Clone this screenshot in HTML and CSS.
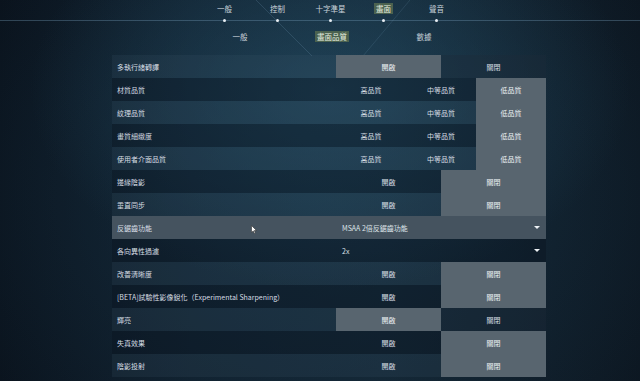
FILE: index.html
```html
<!DOCTYPE html>
<html lang="zh-Hant">
<head>
<meta charset="utf-8">
<link rel="stylesheet" href="styles.css">
</head>
<body>
<div class="screen">
  <svg class="deco" width="640" height="381" viewBox="0 0 640 381">
    <line x1="256" y1="0" x2="312" y2="56" stroke="rgba(150,195,225,0.16)" stroke-width="1"/>
    <line x1="410" y1="0" x2="363" y2="56" stroke="rgba(150,195,225,0.13)" stroke-width="1"/>
  </svg>

  <nav class="tabs">
    <span class="tab">一般</span>
    <span class="tab">控制</span>
    <span class="tab">十字準星</span>
    <span class="tab"><span class="hl">畫面</span></span>
    <span class="tab">聲音</span>
  </nav>
  <div class="rail">
    <span class="stop"><i class="dot"></i></span>
    <span class="stop"><i class="dot"></i></span>
    <span class="stop"><i class="dot"></i></span>
    <span class="stop"><i class="dot"></i></span>
    <span class="stop"><i class="dot"></i></span>
  </div>
  <nav class="subtabs">
    <span class="subtab">一般</span>
    <span class="subtab"><span class="hl">畫面品質</span></span>
    <span class="subtab">數據</span>
  </nav>

  <div class="table">
    <div class="row alt">
      <div class="label">多執行緒轉譯</div>
      <div class="seg"><span class="opt on">開啟</span><span class="opt dim">關閉</span></div>
    </div>
    <div class="row">
      <div class="label">材質品質</div>
      <div class="seg"><span class="opt">高品質</span><span class="opt">中等品質</span><span class="opt on">低品質</span></div>
    </div>
    <div class="row alt">
      <div class="label">紋理品質</div>
      <div class="seg"><span class="opt">高品質</span><span class="opt">中等品質</span><span class="opt on">低品質</span></div>
    </div>
    <div class="row">
      <div class="label">畫質細緻度</div>
      <div class="seg"><span class="opt">高品質</span><span class="opt">中等品質</span><span class="opt on">低品質</span></div>
    </div>
    <div class="row alt">
      <div class="label">使用者介面品質</div>
      <div class="seg"><span class="opt">高品質</span><span class="opt">中等品質</span><span class="opt on">低品質</span></div>
    </div>
    <div class="row">
      <div class="label">邊緣陰影</div>
      <div class="seg"><span class="opt">開啟</span><span class="opt on">關閉</span></div>
    </div>
    <div class="row alt">
      <div class="label">垂直同步</div>
      <div class="seg"><span class="opt">開啟</span><span class="opt on">關閉</span></div>
    </div>
    <div class="row hover">
      <div class="label">反鋸齒功能</div>
      <div class="dd"><span>MSAA 2倍反鋸齒功能</span><i class="caret"></i></div>
      <svg class="cursor" width="6" height="9" viewBox="0 0 6 9"><path d="M0.5 0.5 L0.5 7.5 L2.2 5.9 L3.4 8.5 L4.4 8 L3.3 5.5 L5.5 5.5 Z" fill="#fff" stroke="#333" stroke-width="0.6"/></svg>
    </div>
    <div class="row">
      <div class="label">各向異性過濾</div>
      <div class="dd"><span>2x</span><i class="caret"></i></div>
    </div>
    <div class="row alt">
      <div class="label">改善清晰度</div>
      <div class="seg"><span class="opt">開啟</span><span class="opt on">關閉</span></div>
    </div>
    <div class="row">
      <div class="label">[BETA]試驗性影像銳化（Experimental Sharpening）</div>
      <div class="seg"><span class="opt">開啟</span><span class="opt on">關閉</span></div>
    </div>
    <div class="row alt">
      <div class="label">輝亮</div>
      <div class="seg"><span class="opt on">開啟</span><span class="opt dim">關閉</span></div>
    </div>
    <div class="row">
      <div class="label">失真效果</div>
      <div class="seg"><span class="opt">開啟</span><span class="opt on">關閉</span></div>
    </div>
    <div class="row alt">
      <div class="label">陰影投射</div>
      <div class="seg"><span class="opt">開啟</span><span class="opt on">關閉</span></div>
    </div>
  </div>
</div>
</body>
</html>
```

FILE: styles.css
```css
* { box-sizing: border-box; }
html, body { margin: 0; padding: 0; }
body {
  width: 640px;
  height: 381px;
  overflow: hidden;
  background: #0c1722;
  font-family: "Noto Sans CJK TC", "Noto Sans", "Liberation Sans", sans-serif;
  color: #dde3e8;
}
.screen {
  position: relative;
  width: 640px;
  height: 381px;
  overflow: hidden;
  background:
    radial-gradient(ellipse 300px 200px at 330px 90px, rgba(40,85,110,0.55), rgba(40,85,110,0) 100%),
    radial-gradient(ellipse 420px 330px at 330px 200px, rgba(25,55,75,0.6), rgba(25,55,75,0) 100%),
    linear-gradient(90deg, #0a131d 0%, #0f1d2a 30%, #12222f 60%, #0c1620 100%);
}
.deco {
  position: absolute;
  left: 0;
  top: 0;
  pointer-events: none;
}
.tabs, .rail, .subtabs {
  position: relative;
  display: flex;
  justify-content: center;
  padding-left: 21px;
}
.tabs {
  padding-top: 3px;
  height: 20px;
}
.tab {
  width: 53px;
  text-align: center;
  font-size: 7.5px;
  line-height: 11px;
  color: #c9d2da;
}
.hl {
  background: #4b624f;
  color: #e8f2e2;
  padding: 0 2px;
}
.rail {
  height: 1px;
  background: rgba(120,160,190,0.35);
}
.stop {
  width: 53px;
  display: flex;
  justify-content: center;
}
.dot {
  display: block;
  width: 3px;
  height: 3px;
  margin-top: -1px;
  border-radius: 50%;
  background: #e8eef3;
}
.subtabs {
  margin-top: 10px;
  padding-left: 24px;
}
.subtab {
  width: 92px;
  text-align: center;
  font-size: 7.5px;
  line-height: 11px;
  color: #c9d2da;
}
.table {
  position: relative;
  margin-top: 13px;
  margin-left: 112px;
  width: 434px;
}
.row {
  position: relative;
  display: grid;
  grid-template-columns: 224px 210px;
  height: 23px;
  background: rgba(8,18,28,0.35);
}
.row.alt {
  background: rgba(70,95,115,0.16);
}
.row.hover {
  background: #45535f;
}
.label {
  display: flex;
  align-items: center;
  padding-left: 5px;
  font-size: 7px;
  color: #d6dde3;
  white-space: nowrap;
}
.seg {
  display: flex;
}
.opt {
  flex: 1;
  display: flex;
  align-items: center;
  justify-content: center;
  font-size: 7px;
  color: #d8dee4;
}
.opt.dim {
  background: rgba(10,20,30,0.25);
}
.opt.on {
  background: #58656f;
  color: #eef2f5;
}
.dd {
  display: flex;
  align-items: center;
  justify-content: space-between;
  padding: 0 6px 0 6px;
  font-size: 7px;
  color: #dde3e8;
}
.caret {
  display: block;
  width: 0;
  height: 0;
  border-left: 3px solid transparent;
  border-right: 3px solid transparent;
  border-top: 3px solid #eef2f5;
}
.cursor {
  position: absolute;
  left: 139px;
  top: 9px;
}
```
